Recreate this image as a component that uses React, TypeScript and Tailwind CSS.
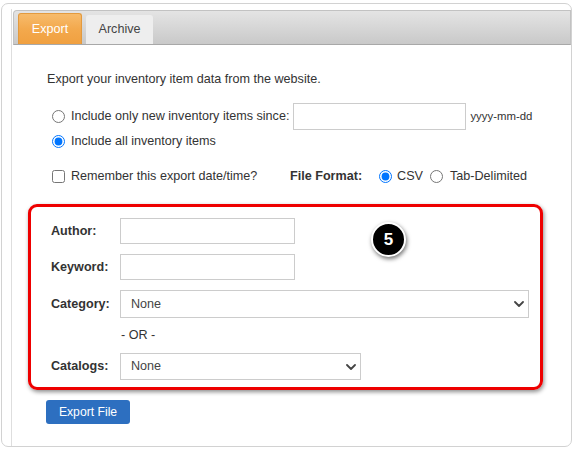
import React from 'react';

const FONT = { fontFamily: '"Liberation Sans", Arial, sans-serif' };

function Chevron() {
  return (
    <svg
      viewBox="0 0 10 6"
      className="pointer-events-none absolute right-[5px] top-1/2 h-[6px] w-[10px] -translate-y-1/2"
    >
      <path d="M1 1 L5 5 L9 1" fill="none" stroke="#444" strokeWidth="1.8" strokeLinecap="round" strokeLinejoin="round" />
    </svg>
  );
}

function SelectBox({ width, height }: { width: string; height: string }) {
  return (
    <div className={`relative ${width} ${height}`}>
      <select className="h-full w-full appearance-none border border-[#cccccc] bg-white pl-[10px] text-[12.6px] text-[#444] outline-none">
        <option>None</option>
      </select>
      <Chevron />
    </div>
  );
}

export default function App() {
  return (
    <div className="h-[450px] w-[573px] overflow-hidden bg-white pl-[1px] pr-[1px] pt-[3px] text-[#333]" style={FONT}>
      <div className="flex h-[444px] flex-col rounded-[7px] border border-[#d2d2d2] pl-[9px] pt-[5px]">
        <div className="flex flex-1 flex-col border-l border-[#dedede] pt-[1px]">
          {/* Tab bar */}
          <div className="ml-[1px] flex h-[35px] items-end gap-[4px] rounded-tl-[4px] border border-[#c2c2c2] border-b-[#a8a8a8] bg-gradient-to-b from-[#e4e4e4] to-[#c9c9c9] pl-[4px]">
            <div className="flex h-[31px] w-[64px] items-center justify-center rounded-t-[3px] border border-b-0 border-[#e39a3e] bg-gradient-to-b from-[#f7bb6b] via-[#f3a94d] to-[#f0a040] text-[12.6px] text-white">
              Export
            </div>
            <div className="flex h-[29px] w-[67px] items-center justify-center rounded-t-[3px] bg-[#eeeeee] text-[12.6px] text-[#444]">
              Archive
            </div>
          </div>

          {/* Content */}
          <div className="flex flex-col pl-[16px]">
            <div className="mt-[27px] flex h-[15px] items-center pl-[19px] text-[12.6px]">
              Export your inventory item data from the website.
            </div>

            <div className="mt-[16px] flex h-[27px] items-center pl-[19px] text-[12.6px]">
              <input type="radio" name="range" className="m-0 ml-[5px] h-[13px] w-[13px]" />
              <span className="ml-[6px]">Include only new inventory items since:</span>
              <input type="text" className="ml-[4px] h-[27px] w-[173px] border border-[#cccccc] bg-white outline-none" />
              <span className="ml-[4px] text-[11.4px]">yyyy-mm-dd</span>
            </div>

            <div className="mt-[2px] flex h-[18px] items-center pl-[19px] text-[12.6px]">
              <input type="radio" name="range" defaultChecked className="m-0 ml-[5px] h-[13px] w-[13px]" />
              <span className="ml-[6px]">Include all inventory items</span>
            </div>

            <div className="mt-[17px] flex h-[18px] items-center pl-[19px] text-[12.6px]">
              <div className="flex w-[243px] items-center">
                <input type="checkbox" className="m-0 ml-[5px] h-[13px] w-[13px]" />
                <span className="ml-[6px]">Remember this export date/time?</span>
              </div>
              <span className="font-bold">File Format:</span>
              <input type="radio" name="fmt" defaultChecked className="m-0 ml-[17px] h-[13px] w-[13px]" />
              <span className="ml-[5px]">CSV</span>
              <input type="radio" name="fmt" className="m-0 ml-[7px] h-[13px] w-[13px]" />
              <span className="ml-[7px]">Tab-Delimited</span>
            </div>

            {/* Highlighted filter block */}
            <div className="relative mt-[19px] flex h-[186px] w-[515px] flex-col rounded-[9px] border-[3px] border-[#ee0000] pl-[20px] pt-[11px] shadow-[1px_2px_4px_rgba(0,0,0,0.45)]">
              <div className="flex h-[26px] items-center">
                <span className="w-[69px] text-[12.6px] font-bold">Author:</span>
                <input type="text" className="h-[26px] w-[175px] border border-[#cccccc] bg-white outline-none" />
              </div>
              <div className="mt-[10px] flex h-[26px] items-center">
                <span className="w-[69px] text-[12.6px] font-bold">Keyword:</span>
                <input type="text" className="h-[26px] w-[175px] border border-[#cccccc] bg-white outline-none" />
              </div>
              <div className="mt-[10px] flex h-[28px] items-center">
                <span className="w-[69px] text-[12.6px] font-bold">Category:</span>
                <SelectBox width="w-[409px]" height="h-[28px]" />
              </div>
              <div className="flex h-[35px] items-center pl-[70px] text-[12.6px]">- OR -</div>
              <div className="flex h-[27px] items-center">
                <span className="w-[69px] text-[12.6px] font-bold">Catalogs:</span>
                <SelectBox width="w-[241px]" height="h-[27px]" />
              </div>

              <div className="absolute left-[340px] top-[15px] flex h-[35px] w-[35px] items-center justify-center rounded-full border-2 border-white bg-black text-[17px] font-bold text-white shadow-[1px_2px_4px_rgba(0,0,0,0.55)]">
                5
              </div>
            </div>

            <div className="mt-[10px] pl-[18px]">
              <button className="flex h-[24px] w-[84px] items-center justify-center rounded-[3px] bg-[#2d6fc0] text-[12.2px] text-white">
                Export File
              </button>
            </div>
          </div>
        </div>
      </div>
    </div>
  );
}
